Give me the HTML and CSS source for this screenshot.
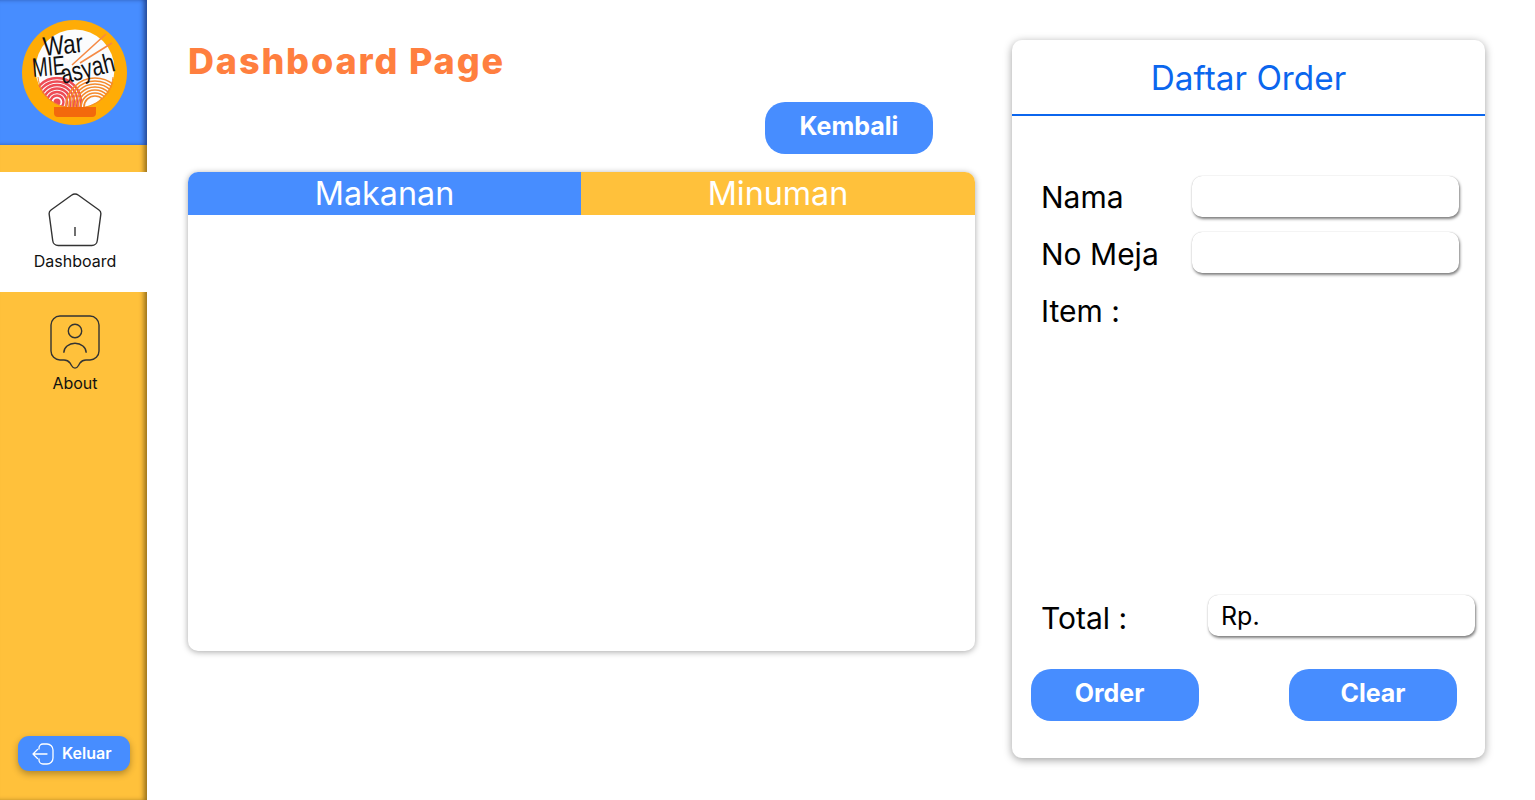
FILE: index.html
```html
<!DOCTYPE html>
<html lang="id">
<head>
<meta charset="utf-8">
<title>Dashboard Page</title>
<link rel="stylesheet" href="styles.css">
</head>
<body>
<div class="app">
  <aside class="sidebar">
    <div class="logo-box">
      <svg class="logo" viewBox="0 0 105 105" width="105" height="105">
        <defs>
          <clipPath id="bowl"><path d="M15 56.500h77a38.500 32 0 0 1-77 0z"/></clipPath>
        </defs>
        <circle cx="52.500" cy="52.500" r="52.500" fill="#ffac06"/>
        <circle cx="53" cy="49" r="39.500" fill="#fbfcfd"/>
        <g clip-path="url(#bowl)">
          <g fill="none" stroke="#ee4b55" stroke-width="2.400">
            <circle cx="35" cy="82" r="24"/>
            <circle cx="35" cy="82" r="20.500"/>
            <circle cx="35" cy="82" r="17"/>
            <circle cx="35" cy="82" r="13.500"/>
            <circle cx="35" cy="82" r="10"/>
            <circle cx="35" cy="82" r="6.500"/>
          </g>
          <circle cx="35" cy="82" r="3.500" fill="#ee4b55"/>
          <g fill="none" stroke="#f58a2c" stroke-width="1.700">
            <circle cx="73" cy="87" r="29"/>
            <circle cx="73" cy="87" r="26"/>
            <circle cx="73" cy="87" r="23"/>
            <circle cx="73" cy="87" r="20"/>
            <circle cx="73" cy="87" r="17"/>
            <circle cx="73" cy="87" r="14"/>
            <circle cx="73" cy="87" r="11"/>
          </g>
        </g>
        <path d="M16 57c2 20 18 31 37.500 31S89 77 91 57" fill="none" stroke="#f58a2c" stroke-width="1"/>
        <path d="M32 87h42v6a4 4 0 0 1-4 4H36a4 4 0 0 1-4-4z" fill="#f3690c"/>
        <path d="M50 45L84 14M58 43L90 23" stroke="#f58a45" stroke-width="1.600" fill="none"/>
        <text class="logo-word" x="22" y="36" transform="rotate(-6 22 36)" textLength="40" lengthAdjust="spacingAndGlyphs">War</text>
        <text class="logo-word" x="11" y="57" transform="rotate(-5 11 57)" textLength="33" lengthAdjust="spacingAndGlyphs">MIE</text>
        <text class="logo-word" x="41" y="64" transform="rotate(-14 41 64)" textLength="55" lengthAdjust="spacingAndGlyphs">asyah</text>
      </svg>
    </div>
    <nav class="nav">
      <a class="nav-item nav-active">
        <svg class="nav-icon" width="54" height="54" viewBox="0 0 54 54" fill="none" stroke="#333" stroke-width="1.400" stroke-linejoin="round">
          <path d="M23.500 2.200a6 6 0 0 1 7 0L51 17a4.500 4.500 0 0 1 1.800 4.300l-3.500 26.200a5.500 5.500 0 0 1-5.500 5H10.200a5.500 5.500 0 0 1-5.500-5L1.200 21.300A4.500 4.500 0 0 1 3 17z"/>
          <path d="M27 34v9"/>
        </svg>
        <span class="nav-label">Dashboard</span>
      </a>
      <a class="nav-item nav-about">
        <svg class="nav-icon" width="50" height="56" viewBox="0 0 50 56" fill="none" stroke="#333" stroke-width="1.400">
          <path d="M10 1h30a9 9 0 0 1 9 9v26a9 9 0 0 1-9 9h-4c-3 0-4.500 1-6 3l-1.500 2.500c-2 3.500-5 3.500-7 0L20 48c-1.500-2-3-3-6-3h-4a9 9 0 0 1-9-9V10a9 9 0 0 1 9-9z"/>
          <circle cx="25" cy="16" r="6.700"/>
          <path d="M13.800 37.700a11.200 9.400 0 0 1 22.400 0"/>
        </svg>
        <span class="nav-label">About</span>
      </a>
    </nav>
    <button class="logout">
      <svg width="22" height="22" viewBox="0 0 22 22" fill="none" stroke="#fff" stroke-width="1.300" stroke-linecap="round" stroke-linejoin="round">
        <path d="M7 6V5a4 4 0 0 1 4-4h4a6 6 0 0 1 6 6v8a6 6 0 0 1-6 6h-4a4 4 0 0 1-4-4v-1"/>
        <path d="M15 11H1M1 11l4.500-4.500M1 11l4.500 4.500"/>
      </svg>
      <span class="logout-text">Keluar</span>
    </button>
  </aside>

  <main class="content">
    <h1 class="page-title">Dashboard Page</h1>
    <div class="toolbar"><button class="btn">Kembali</button></div>
    <section class="menu-panel">
      <div class="tabs">
        <div class="tab tab-food">Makanan</div>
        <div class="tab tab-drink">Minuman</div>
      </div>
    </section>
  </main>

  <aside class="order-card">
    <h2 class="order-title">Daftar Order</h2>
    <div class="order-body">
      <div class="field"><label class="field-label label-name">Nama</label><div class="input"></div></div>
      <div class="field field-second"><label class="field-label">No Meja</label><div class="input"></div></div>
      <div class="items-label">Item :</div>
      <div class="total-row"><span class="field-label total-label">Total :</span><div class="input input-total">Rp.</div></div>
      <div class="actions"><button class="btn btn-order">Order</button><button class="btn btn-clear">Clear</button></div>
    </div>
  </aside>
</div>
</body>
</html>
```
FILE: styles.css
```css
* { box-sizing: border-box; }
html, body { margin: 0; height: 100%; background: #fff; overflow: hidden; }
body { font-family: Inter, "Liberation Sans", sans-serif; color: #000; }
button { font-family: inherit; border: 0; cursor: pointer; }

.app { display: flex; width: 1535px; height: 800px; }

.sidebar {
  width: 147px; flex: none; height: 800px; background: #ffc13b;
  display: flex; flex-direction: column;
  box-shadow: inset -4px 0 5px -1px rgba(70,50,0,.55);
}
.logo-box {
  height: 145px; background: #478dff; padding: 20px 0 0 22px; flex: none;
  box-shadow: inset -4px 0 5px -1px rgba(0,0,40,.5);
}
.logo { display: block; overflow: visible; }
.logo-word { font-family: "Liberation Sans", sans-serif; font-size: 27px; fill: #111; }

.nav { margin-top: 27px; display: flex; flex-direction: column; flex: 1; }
.nav-item { display: flex; flex-direction: column; align-items: center; color: #111; }
.nav-active { height: 120px; background: #fff; padding: 21px 0 0 3px; }
.nav-about { padding: 23px 0 0 3px; }
.nav-label { font-size: 16px; line-height: 20px; }
.nav-active .nav-label { margin-top: 4px; }
.nav-about .nav-label { margin-top: 2px; }
.nav-icon { display: block; }

.logout {
  width: 112px; height: 35px; margin: 0 0 29px 18px; flex: none;
  background: #478dff; color: #fff; border-radius: 11px;
  display: flex; align-items: center; gap: 8px; padding: 0 0 0 14px;
  font-size: 16px; font-weight: 600;
  box-shadow: 0 3px 7px rgba(0,0,0,.3);
}
.logout-text { margin-top: -2px; }

.content { width: 828px; flex: none; padding: 0 0 0 41px; }
.page-title {
  margin: 37px 0 0; height: 48px; line-height: 48px; white-space: nowrap;
  font-family: Inter, sans-serif; font-weight: 800; font-size: 36px; letter-spacing: 1.850px; color: #ff7f3f;
}
.toolbar { display: flex; margin-top: 17px; padding-left: 577px; }
.btn {
  width: 168px; height: 52px; border-radius: 20px;
  background: #478dff; color: #fff; font-size: 25px; font-weight: 700;
}
.toolbar .btn { padding-bottom: 5px; }

.menu-panel {
  width: 787px; height: 479px; margin-top: 18px; background: #fff;
  border-radius: 10px; overflow: hidden;
  box-shadow: 0 1px 6px rgba(0,0,0,.35);
}
.tabs { display: flex; height: 42.500px; }
.tab { color: #fff; text-align: center; font-size: 32.300px; line-height: 43px; }
.tab-food { width: 393px; flex: none; background: #478dff; }
.tab-drink { flex: 1; background: #ffc13b; }

.order-card {
  width: 473px; height: 718px; margin: 40px 0 0 37px; flex: none; background: #fff;
  border-radius: 10px; display: flex; flex-direction: column;
  box-shadow: 0 2px 8px rgba(0,0,0,.38);
}
.order-title {
  margin: 0; height: 76px; border-bottom: 2px solid #0b66ee;
  color: #0b66ee; font-weight: 400; font-size: 33.300px; line-height: 76px; text-align: center;
}
.order-body { flex: 1; display: flex; flex-direction: column; padding: 60px 0 0 29px; }
.field { display: flex; align-items: center; height: 41px; }
.field-second { margin-top: 15px; }
.field-label { width: 151px; flex: none; font-size: 30px; padding-top: 3px; }
.label-name { padding-top: 1px; }
.input {
  width: 267px; height: 41px; background: #fff; border-radius: 10px;
  box-shadow: 1px 2px 3px rgba(0,0,0,.5), 0 0 1px rgba(0,0,0,.25);
}
.items-label { font-size: 30px; margin-top: 20px; line-height: 36px; height: 36px; flex: none; }
.total-row { display: flex; align-items: center; margin-top: 266px; height: 41px; }
.total-label { width: 167px; padding-top: 4px; }
.input-total { font-size: 25px; line-height: 43px; padding-left: 13px; }
.actions { display: flex; margin: 33px 0 0 -10px; gap: 90px; }
.btn-order { padding: 0 11px 4px 0; }
.btn-clear { padding: 0 0 4px 0; }
```
